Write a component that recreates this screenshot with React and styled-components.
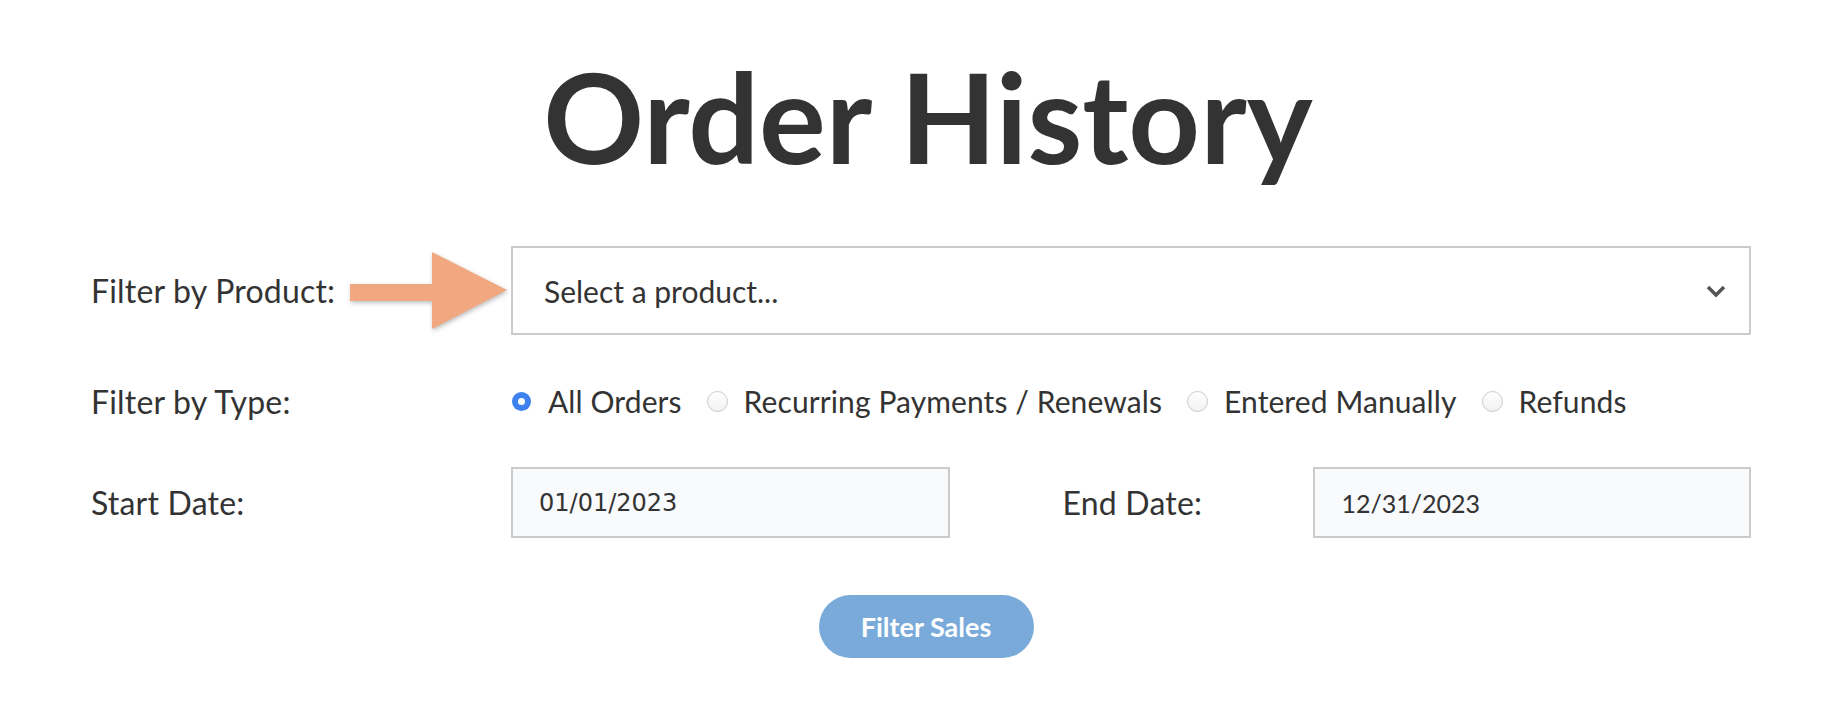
import React from "react";
import styled, { createGlobalStyle } from "styled-components";

const GlobalStyle = createGlobalStyle`
  body {
    margin: 0;
    background: #fff;
    font-family: Lato, "Open Sans", sans-serif;
    color: #333;
  }
`;

const Page = styled.div`
  padding: 41px 79px 0 91px;
`;

const Title = styled.h1`
  margin: 0;
  text-align: center;
  font-family: Lato, sans-serif;
  font-weight: 700;
  font-size: 125px;
  line-height: 1.2;
  color: #333;
  padding-left: 14px;
`;

const Form = styled.div`
  margin-top: 55px;
  display: grid;
  grid-template-columns: 420px 1fr 363px 1fr;
  row-gap: 46px;
  align-items: center;
`;

const Label = styled.label`
  font-size: 32px;
  letter-spacing: 0.2px;
  color: #333;
  padding-left: ${(p) => p.$indent || 0}px;
`;

const LabelCell = styled.div`
  position: relative;
  height: 100%;
  display: flex;
  align-items: center;
`;

const Arrow = styled.svg`
  position: absolute;
  left: 259px;
  top: 6px;
  filter: drop-shadow(1px 2px 2px rgba(0, 0, 0, 0.25));
`;

const SelectBox = styled.div`
  grid-column: 2 / 5;
  height: 89px;
  box-sizing: border-box;
  border: 2px solid #cbcbcb;
  display: flex;
  align-items: center;
  justify-content: space-between;
  padding: 0 22px 0 31px;
  font-size: 30px;
  color: #333;
`;

const Radios = styled.div`
  grid-column: 2 / 5;
  display: flex;
  align-items: center;
  height: 40px;
`;

const RadioItem = styled.div`
  display: flex;
  align-items: center;
  gap: 16px;
  margin-right: 25px;
  font-size: 30px;
  letter-spacing: 0.1px;
  color: #333;
`;

const Dot = styled.span`
  width: ${(p) => (p.$on ? 19 : 21)}px;
  height: ${(p) => (p.$on ? 19 : 21)}px;
  margin: ${(p) => (p.$on ? "0 1px" : "0")};
  border-radius: 50%;
  box-sizing: border-box;
  flex: none;
  background: ${(p) => (p.$on ? "#3d82ee" : "linear-gradient(#fff, #f1f1f1)")};
  border: ${(p) => (p.$on ? "none" : "1px solid #c9c9c9")};
  display: flex;
  align-items: center;
  justify-content: center;
  &::after {
    content: "";
    width: 7px;
    height: 7px;
    border-radius: 50%;
    background: #fff;
    display: ${(p) => (p.$on ? "block" : "none")};
  }
`;

const DateBox = styled.div`
  height: 71px;
  box-sizing: border-box;
  border: 2px solid #cbcbcb;
  background: #f9fafc;
  display: flex;
  align-items: center;
  padding-left: ${(p) => p.$pad}px;
  font-family: ${(p) => (p.$mono ? '"DejaVu Sans", sans-serif' : "Lato, sans-serif")};
  font-size: ${(p) => (p.$mono ? 24 : 25)}px;
  color: #333;
`;

const ButtonRow = styled.div`
  display: flex;
  justify-content: center;
  margin-top: 57px;
  padding-left: 10px;
`;

const Button = styled.button`
  width: 215px;
  height: 63px;
  border: none;
  border-radius: 32px;
  background: #79aad9;
  color: #fff;
  font-family: Lato, sans-serif;
  font-weight: 700;
  font-size: 27px;
`;

const options = [
  { label: "All Orders", on: true },
  { label: "Recurring Payments / Renewals" },
  { label: "Entered Manually" },
  { label: "Refunds" },
];

export default function App() {
  return (
    <Page>
      <GlobalStyle />
      <Title>Order History</Title>
      <Form>
        <LabelCell>
          <Label>Filter by Product:</Label>
          <Arrow width="160" height="78" viewBox="0 0 160 78">
            <path d="M0 32 H82 V0 L157 38 L82 77 V49 H0 Z" fill="#f1a880" />
          </Arrow>
        </LabelCell>
        <SelectBox>
          <span>Select a product...</span>
          <svg width="22" height="14" viewBox="0 0 22 14">
            <polyline points="3,3 11,11 19,3" fill="none" stroke="#555" strokeWidth="3.5" />
          </svg>
        </SelectBox>

        <Label>Filter by Type:</Label>
        <Radios>
          {options.map((o) => (
            <RadioItem key={o.label}>
              <Dot $on={o.on} />
              {o.label}
            </RadioItem>
          ))}
        </Radios>

        <Label>Start Date:</Label>
        <DateBox $mono $pad={26}>01/01/2023</DateBox>
        <Label $indent={113}>End Date:</Label>
        <DateBox $pad={27}>12/31/2023</DateBox>
      </Form>
      <ButtonRow>
        <Button>Filter Sales</Button>
      </ButtonRow>
    </Page>
  );
}
